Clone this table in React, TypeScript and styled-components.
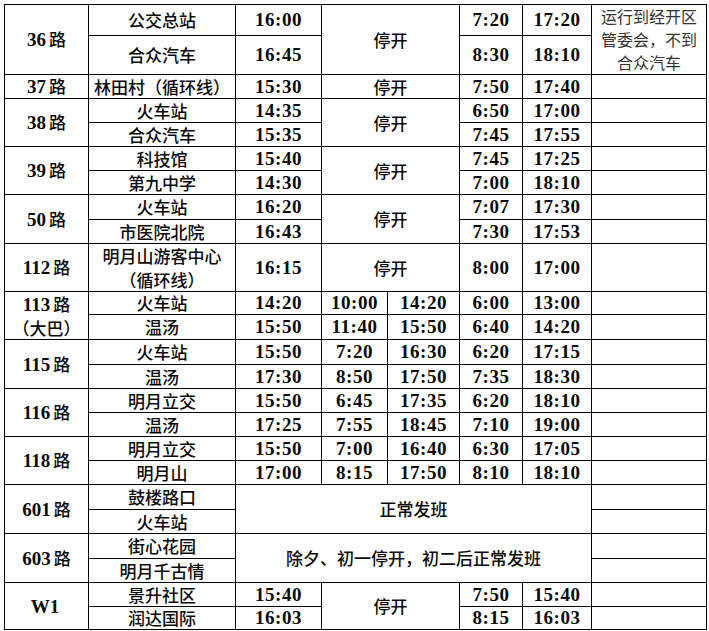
import React from 'react';
import styled, { createGlobalStyle } from 'styled-components';

const GlobalStyle = createGlobalStyle`
  html, body {
    margin: 0;
    padding: 0;
    background: #fff;
  }
  body {
    font-family: 'Liberation Serif', 'Noto Sans CJK SC', serif;
    color: #111;
  }
`;

const Page = styled.main`
  padding: 4px 0 0 4px;
`;

const Table = styled.table`
  border-collapse: collapse;
  table-layout: fixed;
  width: 703px;
`;

const Col = styled.col<{ $w: number }>`
  width: ${(p) => p.$w}px;
`;

const Row = styled.tr<{ $h: number }>`
  height: ${(p) => p.$h}px;
`;

type Kind = 'route' | 'station' | 'time' | 'status' | 'note' | 'empty';

const Cell = styled.td<{ $kind?: Kind }>`
  border: 1px solid #000;
  padding: 0;
  text-align: center;
  vertical-align: middle;
  white-space: nowrap;
  line-height: 20px;
  font-family: 'Noto Sans CJK SC', sans-serif;
  font-size: 17px;
  font-weight: 500;
  color: #0a0a0a;

  ${(p) =>
    p.$kind === 'time' &&
    `
    font-family: 'Liberation Serif', serif;
    font-size: 19px;
    font-weight: 700;
    letter-spacing: 0.5px;
  `}

  ${(p) =>
    p.$kind === 'note' &&
    `
    font-size: 16px;
    font-weight: 400;
    line-height: 23px;
    color: #333;
    vertical-align: top;
  `}
`;

const Lines = styled.span`
  display: block;
  line-height: 23.5px;
`;

const Num = styled.span`
  font-family: 'Liberation Serif', serif;
  font-size: 19px;
  font-weight: 700;
  line-height: 20px;
  margin-right: 3px;
`;

type Stop = {
  name: React.ReactNode;
  dep?: string;
  times?: string[];
};

type Group = {
  id: string;
  route: React.ReactNode;
  heights: number[];
  stops: Stop[];
  status?: string;
  message?: string;
  note?: React.ReactNode;
};

const routeName = (num: string, extra?: string) => {
  const label = (
    <>
      <Num>{num}</Num>
      {num !== 'W1' && '路'}
    </>
  );
  if (!extra) return label;
  return (
    <Lines>
      {label}
      <br />
      {extra}
    </Lines>
  );
};

const groups: Group[] = [
  {
    id: '36',
    route: routeName('36'),
    heights: [31, 39],
    status: '停开',
    stops: [
      { name: '公交总站', dep: '16:00', times: ['7:20', '17:20'] },
      { name: '合众汽车', dep: '16:45', times: ['8:30', '18:10'] },
    ],
    note: (
      <>
        运行到经开区
        <br />
        管委会，不到
        <br />
        合众汽车
      </>
    ),
  },
  {
    id: '37',
    route: routeName('37'),
    heights: [24],
    status: '停开',
    stops: [{ name: '林田村（循环线）', dep: '15:30', times: ['7:50', '17:40'] }],
  },
  {
    id: '38',
    route: routeName('38'),
    heights: [24, 24],
    status: '停开',
    stops: [
      { name: '火车站', dep: '14:35', times: ['6:50', '17:00'] },
      { name: '合众汽车', dep: '15:35', times: ['7:45', '17:55'] },
    ],
  },
  {
    id: '39',
    route: routeName('39'),
    heights: [24, 24],
    status: '停开',
    stops: [
      { name: '科技馆', dep: '15:40', times: ['7:45', '17:25'] },
      { name: '第九中学', dep: '14:30', times: ['7:00', '18:10'] },
    ],
  },
  {
    id: '50',
    route: routeName('50'),
    heights: [25, 24],
    status: '停开',
    stops: [
      { name: '火车站', dep: '16:20', times: ['7:07', '17:30'] },
      { name: '市医院北院', dep: '16:43', times: ['7:30', '17:53'] },
    ],
  },
  {
    id: '112',
    route: routeName('112'),
    heights: [48],
    status: '停开',
    stops: [
      {
        name: (
          <Lines>
            明月山游客中心
            <br />
            （循环线）
          </Lines>
        ),
        dep: '16:15',
        times: ['8:00', '17:00'],
      },
    ],
  },
  {
    id: '113',
    route: routeName('113', '（大巴）'),
    heights: [23, 24],
    stops: [
      { name: '火车站', dep: '14:20', times: ['10:00', '14:20', '6:00', '13:00'] },
      { name: '温汤', dep: '15:50', times: ['11:40', '15:50', '6:40', '14:20'] },
    ],
  },
  {
    id: '115',
    route: routeName('115'),
    heights: [25, 24],
    stops: [
      { name: '火车站', dep: '15:50', times: ['7:20', '16:30', '6:20', '17:15'] },
      { name: '温汤', dep: '17:30', times: ['8:50', '17:50', '7:35', '18:30'] },
    ],
  },
  {
    id: '116',
    route: routeName('116'),
    heights: [24, 24],
    stops: [
      { name: '明月立交', dep: '15:50', times: ['6:45', '17:35', '6:20', '18:10'] },
      { name: '温汤', dep: '17:25', times: ['7:55', '18:45', '7:10', '19:00'] },
    ],
  },
  {
    id: '118',
    route: routeName('118'),
    heights: [24, 24],
    stops: [
      { name: '明月立交', dep: '15:50', times: ['7:00', '16:40', '6:30', '17:05'] },
      { name: '明月山', dep: '17:00', times: ['8:15', '17:50', '8:10', '18:10'] },
    ],
  },
  {
    id: '601',
    route: routeName('601'),
    heights: [25, 24],
    message: '正常发班',
    stops: [{ name: '鼓楼路口' }, { name: '火车站' }],
  },
  {
    id: '603',
    route: routeName('603'),
    heights: [25, 24],
    message: '除夕、初一停开，初二后正常发班',
    stops: [{ name: '街心花园' }, { name: '明月千古情' }],
  },
  {
    id: 'W1',
    route: routeName('W1'),
    heights: [24, 23],
    status: '停开',
    stops: [
      { name: '景升社区', dep: '15:40', times: ['7:50', '15:40'] },
      { name: '润达国际', dep: '16:03', times: ['8:15', '16:03'] },
    ],
  },
];

const columns = [84, 147, 86, 66, 72, 63, 69, 115];

const RouteGroup = ({ group }: { group: Group }) => {
  const span = group.stops.length;
  return (
    <>
      {group.stops.map((stop, i) => (
        <Row $h={group.heights[i]} key={`${group.id}-${i}`}>
          {i === 0 && (
            <Cell rowSpan={span} $kind="route">
              {group.route}
            </Cell>
          )}
          <Cell $kind="station">{stop.name}</Cell>
          {group.message ? (
            i === 0 && (
              <Cell colSpan={5} rowSpan={span} $kind="status">
                {group.message}
              </Cell>
            )
          ) : (
            <>
              <Cell $kind="time">{stop.dep}</Cell>
              {group.status && i === 0 && (
                <Cell colSpan={2} rowSpan={span} $kind="status">
                  {group.status}
                </Cell>
              )}
              {(stop.times || []).map((t, j) => (
                <Cell $kind="time" key={j}>
                  {t}
                </Cell>
              ))}
            </>
          )}
          {group.note ? (
            i === 0 && (
              <Cell rowSpan={span} $kind="note">
                {group.note}
              </Cell>
            )
          ) : (
            <Cell $kind="empty" />
          )}
        </Row>
      ))}
    </>
  );
};

const App = () => {
  return (
    <Page>
      <GlobalStyle />
      <Table>
        <colgroup>
          {columns.map((w, i) => (
            <Col $w={w} key={i} />
          ))}
        </colgroup>
        <tbody>
          {groups.map((g) => (
            <RouteGroup group={g} key={g.id} />
          ))}
        </tbody>
      </Table>
    </Page>
  );
};

export default App;
